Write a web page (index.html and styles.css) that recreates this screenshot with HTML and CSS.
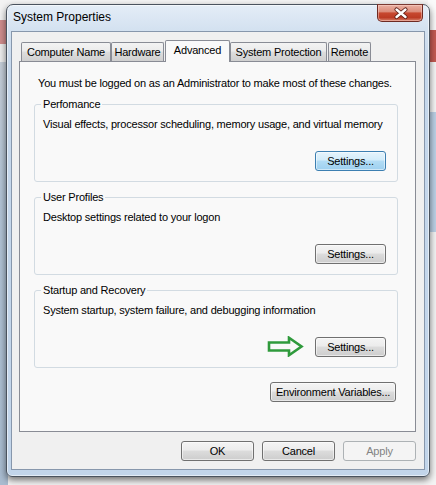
FILE: index.html
```html
<!DOCTYPE html>
<html>
<head>
<meta charset="utf-8">
<title>System Properties</title>
<link rel="stylesheet" href="styles.css">
</head>
<body>
<div class="window">
  <div class="titlebar">
    <span class="title">System Properties</span>
    <div class="close">
      <svg width="44" height="17" viewBox="0 0 44 17">
        <path d="M18.5 4.5 L27.5 12 M27.5 4.5 L18.5 12" stroke="#5a1a12" stroke-width="4.2" stroke-linecap="round" fill="none"/>
        <path d="M18.5 4.5 L27.5 12 M27.5 4.5 L18.5 12" stroke="#ffffff" stroke-width="2.4" stroke-linecap="round" fill="none"/>
      </svg>
    </div>
  </div>
  <div class="client">
    <div class="tabs">
      <div class="tab t-cn">Computer Name</div>
      <div class="tab t-hw">Hardware</div>
      <div class="tab active t-adv">Advanced</div>
      <div class="tab t-sp">System Protection</div>
      <div class="tab t-rm">Remote</div>
    </div>
    <div class="panel">
      <p class="intro">You must be logged on as an Administrator to make most of these changes.</p>
      <fieldset class="group">
        <legend>Perfomance</legend>
        <p class="desc">Visual effects, processor scheduling, memory usage, and virtual memory</p>
        <div class="row"><button class="btn focus set">Settings...</button></div>
      </fieldset>
      <fieldset class="group">
        <legend>User Profiles</legend>
        <p class="desc">Desktop settings related to your logon</p>
        <div class="row"><button class="btn set">Settings...</button></div>
      </fieldset>
      <fieldset class="group">
        <legend>Startup and Recovery</legend>
        <p class="desc">System startup, system failure, and debugging information</p>
        <div class="row">
          <svg class="arrow" width="37" height="21" viewBox="0 0 37 21">
            <path d="M2 6.5 H22 V1.8 L34.5 10.5 L22 19.2 V14.5 H2 Z" fill="none" stroke="#2f9a3c" stroke-width="2.6" stroke-linejoin="miter"/>
          </svg>
          <button class="btn set">Settings...</button>
        </div>
      </fieldset>
      <div class="envrow"><button class="btn env">Environment Variables...</button></div>
    </div>
    <div class="footer">
      <button class="btn foot">OK</button>
      <button class="btn foot">Cancel</button>
      <button class="btn foot" disabled>Apply</button>
    </div>
  </div>
</div>
</body>
</html>
```
FILE: styles.css
```css
html, body {
  margin: 0;
  padding: 0;
}

body {
  width: 436px;
  height: 485px;
  overflow: hidden;
  background-color: #f4f4f4;
  background-image:
    linear-gradient(to bottom, #f3f3f3 0, #f3f3f3 20px, #cf8d8d 20px, #cf8d8d 44px, #eeeeee 44px, #eeeeee 62px, #c5ced8 62px, #b2c4d6 200px, #a9bcd0 100%),
    linear-gradient(to bottom, #fafafa 0, #fafafa 30px, #c45a52 30px, #c45a52 62px, #f6f6f6 62px, #f6f6f6 112px, #bcd1e6 112px, #bcd1e6 232px, #f4f4f4 232px, #f4f4f4 100%);
  background-size: 8px 100%, 8px 100%;
  background-position: left top, right top;
  background-repeat: no-repeat;
  font-family: "Liberation Sans", Arial, sans-serif;
  font-size: 11px;
  color: #000;
}

.window {
  margin: 4px 0 0 6px;
  width: 424px;
  height: 473px;
  box-sizing: border-box;
  border: 1px solid #4a535e;
  border-radius: 7px 7px 6px 6px;
  background: linear-gradient(to bottom, #e4edf7 0, #d3e1f0 26px, #c6d8ec 60px, #c2d5ea 100%);
  box-shadow: inset 0 0 0 1px rgba(255, 255, 255, 0.55), 0 3px 7px rgba(0, 0, 0, 0.55);
  padding: 0 4px 6px;
  display: flex;
  flex-direction: column;
}

.titlebar {
  height: 26px;
  display: flex;
  justify-content: space-between;
  align-items: flex-start;
  padding: 0 2px 0 2px;
  flex: none;
}

.title {
  font-size: 12px;
  line-height: 14px;
  margin-top: 5px;
  color: #000;
}

.close {
  width: 46px;
  height: 18px;
  margin-top: -1px;
  box-sizing: border-box;
  border: 1px solid #6e2a22;
  border-top-color: #7a3a32;
  border-radius: 0 0 5px 5px;
  background: linear-gradient(to bottom, #eab0a2 0, #dc8c7a 42%, #c7482f 50%, #bc3b24 78%, #d6806a 100%);
  box-shadow: inset 0 0 0 1px rgba(255, 220, 210, 0.45);
  display: flex;
  align-items: flex-start;
  justify-content: center;
}

.close svg {
  display: block;
}

.client {
  height: 439px;
  box-sizing: border-box;
  border: 1px solid #8797ac;
  background: #f0f0f0;
  padding: 8px 8px 0 7px;
  display: flex;
  flex-direction: column;
  flex: none;
}

.tabs {
  height: 22px;
  margin-bottom: -1px;
  padding-left: 2px;
  display: flex;
  align-items: flex-end;
  flex: none;
}

.tab {
  height: 19px;
  margin-bottom: 1px;
  box-sizing: border-box;
  border: 1px solid #898c95;
  border-bottom: none;
  border-radius: 2px 2px 0 0;
  background: linear-gradient(to bottom, #f3f3f3 0, #ebebeb 45%, #dddddd 50%, #d0d0d0 100%);
  line-height: 18px;
  text-align: center;
  white-space: nowrap;
  letter-spacing: -0.2px;
}

.tab.active {
  position: relative;
  z-index: 1;
  height: 22px;
  margin-bottom: 0;
  background: #f9f9f9;
  line-height: 18px;
}

.t-cn { width: 90px; }
.t-hw { width: 53px; margin-right: 1px; }
.t-adv { width: 65px; }
.t-sp { width: 97px; margin-right: 1px; }
.t-rm { width: 43px; }

.panel {
  height: 371px;
  box-sizing: border-box;
  border: 1px solid #898c95;
  background: #f9f9f9;
  padding: 14px 17px 0 14px;
  flex: none;
}

.intro {
  margin: 0 0 0 4px;
  line-height: 14px;
  letter-spacing: -0.2px;
  white-space: nowrap;
}

.group {
  margin: 7px 0 0;
  padding: 0 11px 10px 6px;
  border: 1px solid #d2dbe2;
  border-radius: 3px;
  min-width: 0;
}

.group + .group {
  margin-top: 8px;
}

.group legend {
  padding: 0 2px;
  line-height: 15px;
  letter-spacing: -0.2px;
}

.desc {
  margin: 5px 0 0 2px;
  line-height: 14px;
  letter-spacing: -0.2px;
  white-space: nowrap;
}

.row {
  margin-top: 20px;
  display: flex;
  justify-content: flex-end;
  align-items: center;
  gap: 11px;
}

.arrow {
  display: block;
  margin-top: -1px;
}

.btn {
  height: 20px;
  box-sizing: border-box;
  padding: 0;
  border: 1px solid #707070;
  border-radius: 3px;
  background: linear-gradient(to bottom, #f4f4f4 0, #ececec 45%, #dcdcdc 50%, #cdcdcd 100%);
  box-shadow: inset 0 0 0 1px rgba(255, 255, 255, 0.55);
  font-family: "Liberation Sans", Arial, sans-serif;
  font-size: 11px;
  letter-spacing: -0.2px;
  line-height: 18px;
  color: #000;
  text-align: center;
}

.btn.focus {
  border-color: #3c7fb1;
  background: linear-gradient(to bottom, #e6f4fc 0, #d2ecfa 45%, #b2dcf5 50%, #9dd0ef 100%);
  box-shadow: inset 0 0 0 1px rgba(255, 255, 255, 0.5);
}

.btn:disabled {
  border-color: #adb2b5;
  background: #f4f4f4;
  box-shadow: none;
  color: #838383;
}

.set {
  width: 71px;
}

.envrow {
  margin-top: 14px;
  padding-right: 2px;
  display: flex;
  justify-content: flex-end;
}

.env {
  width: 126px;
}

.footer {
  margin-top: 9px;
  display: flex;
  justify-content: flex-end;
  gap: 8px;
  flex: none;
}

.foot {
  width: 73px;
}
```
